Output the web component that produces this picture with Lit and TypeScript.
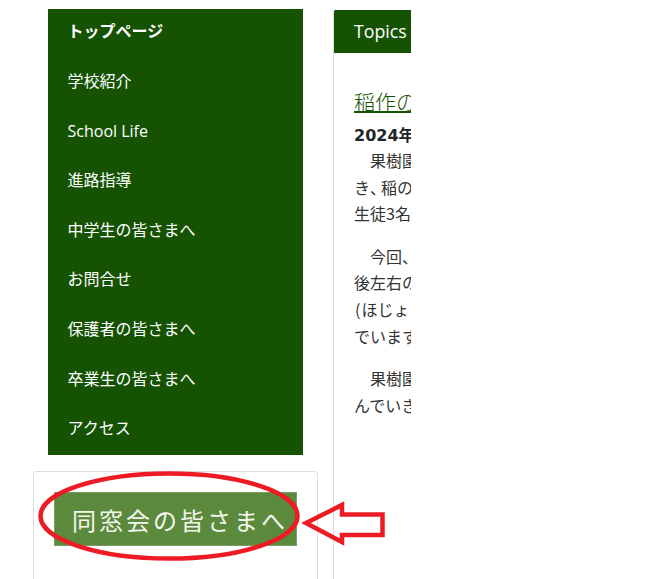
import { LitElement, html, css, svg } from "lit";
import { customElement } from "lit/decorators.js";

const NAV = ["トップページ", "学校紹介", "School Life", "進路指導", "中学生の皆さまへ", "お問合せ", "保護者の皆さまへ", "卒業生の皆さまへ", "アクセス"];
const PARAS = [
  [html`果樹園`, html`き<span class="tight">、</span>稲の`, html`生徒3名`],
  [html`今回、`, html`後左右の`, html`<span class="paren">(</span>ほじょう`, html`でいます`],
  [html`果樹園`, html`んでいき`],
];

@customElement("app-root")
export class AppRoot extends LitElement {
  static styles = css`
    :host {
      display: block;
      position: relative;
      width: 668px;
      height: 579px;
      overflow: hidden;
      background: #fff;
      font-family: "Noto Sans CJK JP", "Noto Sans", sans-serif;
      color: #212529;
    }
    .page {
      display: flex;
      height: 100%;
      box-sizing: border-box;
      padding: 9px 0 0 33px;
      gap: 15px;
    }
    .side {
      width: 285px;
      display: flex;
      flex-direction: column;
      gap: 16px;
    }
    nav {
      margin: 0 15px;
      height: 446px;
      background: #155303;
      display: flex;
      flex-direction: column;
      padding: 0 19.5px;
      box-sizing: border-box;
    }
    nav a {
      height: 49.6px;
      flex: none;
      display: flex;
      align-items: center;
      color: #fff;
      font-size: 16px;
      line-height: 1;
      font-family: "Open Sans", "Noto Sans CJK JP", sans-serif;
    }
    nav a.cur {
      font-weight: 700;
      height: 44.2px;
      padding-bottom: 3px;
    }
    .card {
      flex: 1;
      border: 1px solid #dcdcdc;
      border-bottom: 0;
      border-radius: 4px 4px 0 0;
      padding: 20px;
    }
    .banner {
      width: 243px;
      height: 54px;
      box-sizing: border-box;
      background: #5b8a3c;
      border: 1px solid #7d9c68;
      color: #f4f6ee;
      display: flex;
      align-items: center;
      padding-left: 17px;
      font-family: "Noto Sans CJK JP", serif;
      font-weight: 400;
      font-size: 24px;
      letter-spacing: 3px;
      white-space: nowrap;
    }
    .main {
      width: 77px;
      border-left: 1px solid #dcdcdc;
      border-top-left-radius: 4px;
      overflow: hidden;
      white-space: nowrap;
    }
    .head {
      height: 43px;
      background: #155303;
      color: #fff;
      font-size: 17.8px;
      line-height: 42px;
      padding-left: 20px;
      font-family: "Open Sans", sans-serif;
      margin-top: 1px;
    }
    .body { padding: 35px 0 0 20px; }
    h2 {
      margin: 0;
      font-size: 21px;
      font-weight: 300;
      line-height: 26px;
      color: #155303;
      text-decoration: underline;
      text-decoration-thickness: 2px;
      text-underline-offset: 1px;
    }
    .date {
      font-weight: 700;
      font-size: 16px;
      line-height: 24px;
      margin-top: 10px;
      font-family: "DejaVu Sans", "Noto Sans CJK JP", sans-serif;
    }
    p {
      margin: 0 0 16px;
      font-size: 16px;
      line-height: 26.6px;
      color: #333;
    }
    p:first-of-type { margin-top: -1px; }
    p .line { display: block; }
    p .line:first-child { text-indent: 16px; }
    .tight { letter-spacing: -5px; }
    .paren { margin: 0 1px 0 1px; }
    .marks {
      position: absolute;
      left: 0;
      top: 0;
      pointer-events: none;
    }
  `;

  render() {
    return html`
      <div class="page">
        <div class="side">
          <nav>
            ${NAV.map((n, i) => html`<a class=${i === 0 ? "cur" : ""}>${n}</a>`)}
          </nav>
          <div class="card"><div class="banner">同窓会の皆さまへ</div></div>
        </div>
        <div class="main">
          <div class="head">Topics</div>
          <div class="body">
            <h2>稲作の取</h2>
            <div class="date">2024年</div>
            ${PARAS.map((p) => html`<p>${p.map((l) => html`<span class="line">${l}</span>`)}</p>`)}
          </div>
        </div>
      </div>
      <svg class="marks" width="668" height="579" viewBox="0 0 668 579" fill="none" stroke="#ed1c24" stroke-width="4.5">
        ${svg`<ellipse cx="169" cy="516" rx="128.5" ry="42.5" />`}
        ${svg`<path d="M306 523 L342 505 L342 514.5 L382.5 514.5 L382.5 535 L342 535 L342 542 Z" stroke-linejoin="miter" />`}
      </svg>
    `;
  }
}
